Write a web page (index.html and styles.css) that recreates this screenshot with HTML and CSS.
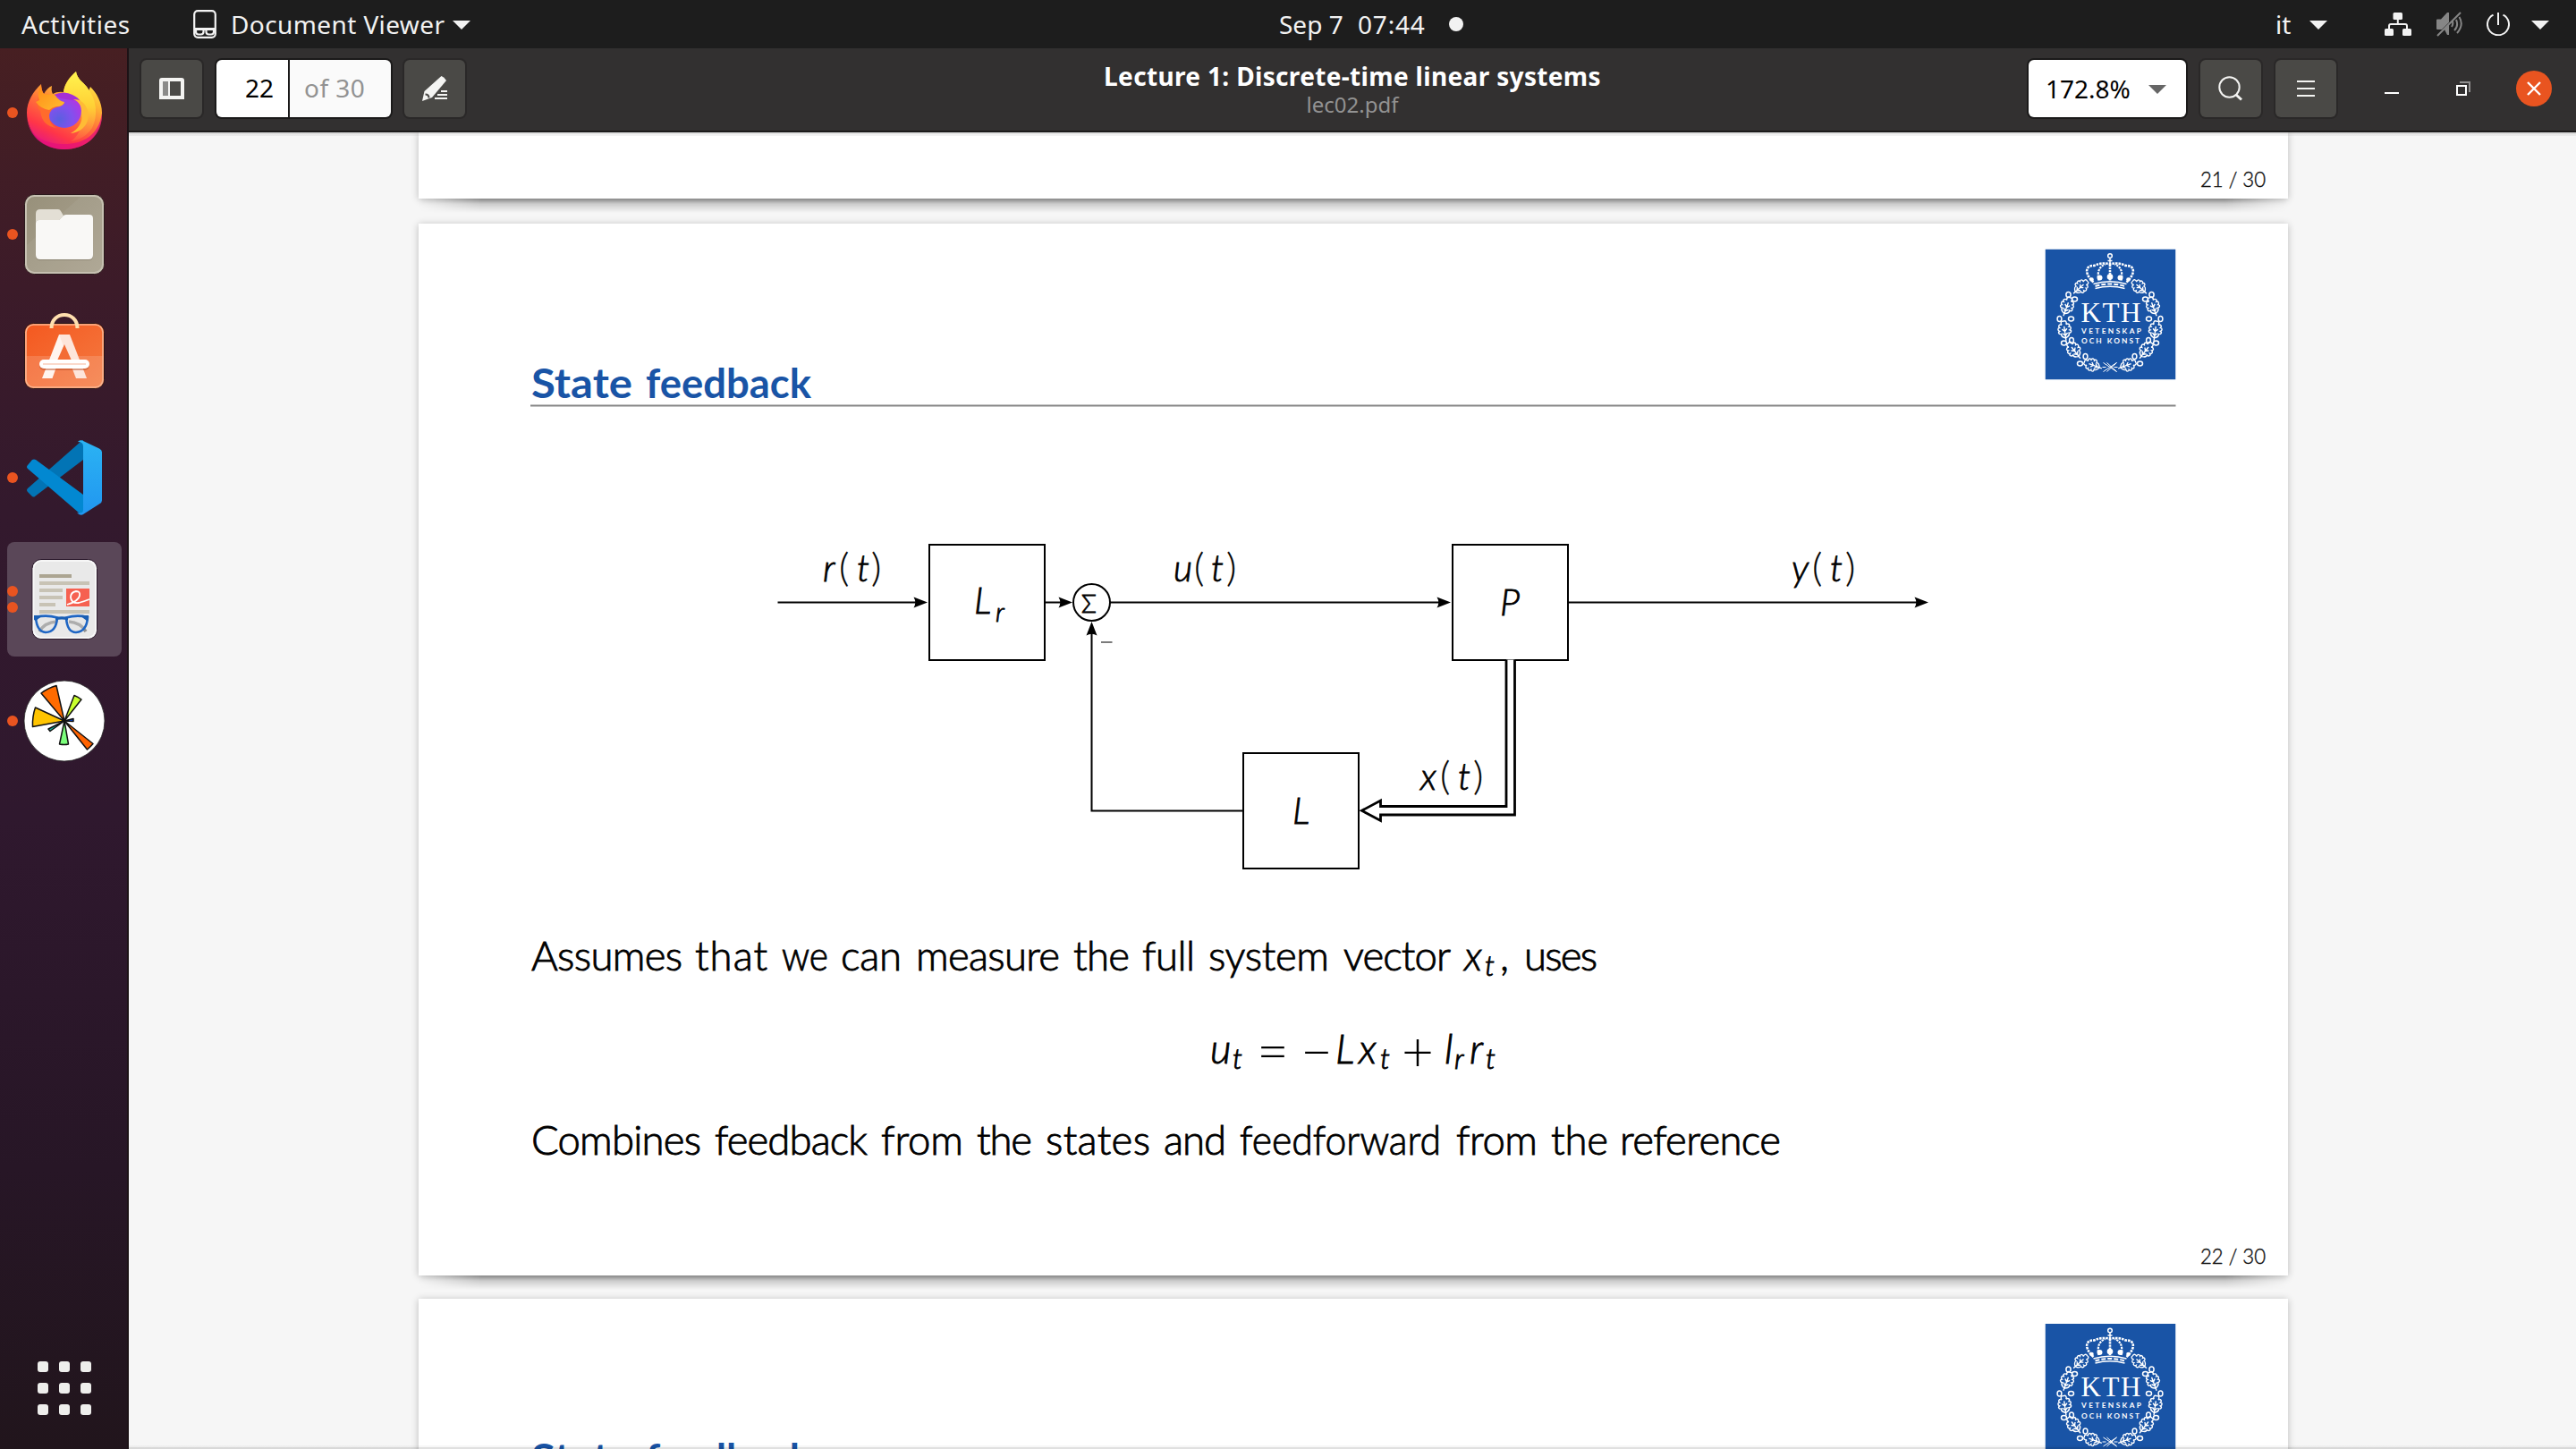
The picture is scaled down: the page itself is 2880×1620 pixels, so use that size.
FILE: index.html
```html
<!DOCTYPE html>
<html lang="en">
<head>
<meta charset="utf-8">
<title>Lecture 1: Discrete-time linear systems</title>
<link rel="stylesheet" href="styles.css">
</head>
<body>
<svg class="defs" aria-hidden="true">
  <defs>
    <symbol id="caret" viewBox="0 0 20 10"><path d="M0 0h20L10 10z" fill="currentColor"/></symbol>
    <path id="leaf" d="M0-12c3-1 4 2 2.500 4c3-1.500 5 1 3 3c2.500 0 3 3 .500 4c2.500 1 1.500 4-1.500 3.500c1 3-1.500 4-4.500 5.500c-3-1.500-5.500-2.500-4.500-5.500c-3 .500-4-2.500-1.500-3.500c-2.500-1-2-4 .500-4c-2-2 0-4.500 3-3c-1.500-2-.500-5 2.500-4zM0-6v17M0 0l3-3M0 0l-3-3M0 5l3-3M0 5l-3-3"/>
    <g id="branch">
      <use href="#leaf" transform="translate(39 43) rotate(48) scale(.9)"/>
      <use href="#leaf" transform="translate(24 65) rotate(20) scale(.95)"/>
      <use href="#leaf" transform="translate(22 92) rotate(-8) scale(.95)"/>
      <use href="#leaf" transform="translate(33 114) rotate(-38) scale(.95)"/>
      <use href="#leaf" transform="translate(54 130) rotate(-70) scale(.9)"/>
      <ellipse cx="26" cy="51" rx="2.600" ry="3"/><ellipse cx="33" cy="56" rx="3" ry="2.400"/>
      <ellipse cx="16" cy="78" rx="2.400" ry="3"/><ellipse cx="29" cy="78" rx="3" ry="2.400"/>
      <ellipse cx="21" cy="105" rx="3" ry="2.400"/><ellipse cx="29.500" cy="102" rx="2.400" ry="3"/>
      <ellipse cx="39" cy="128" rx="3" ry="2.400"/><ellipse cx="45" cy="120" rx="2.400" ry="3"/>
    </g>
    <symbol id="kth" viewBox="0 0 146 146">
      <rect width="146" height="146" fill="#1954a6"/>
      <g fill="none" stroke="#fff" stroke-width="1.500">
        <use href="#branch"/>
        <use href="#branch" transform="translate(145 0) scale(-1 1)"/>
        <path d="M65 127l15 10M65 137l15-10M69 127l11 10M69 137l11-10M64 132h4M77 132h4" stroke-width="1"/>
        <circle cx="72.500" cy="7.500" r="2.300"/><path d="M72.500 10v7M70 13h5"/>
        <path d="M54 37C44 28 44 18 55 18.500C62 15 67 16 72.500 16.500C78 16 83 15 90 18.500C101 18 101 28 91 37" stroke-width="2.600" stroke-dasharray="2.600 1"/>
        <path d="M60 35C58 26 60 20 67 17M85 35C87 26 85 20 78 17" stroke-width="2.200" stroke-dasharray="2.400 1"/>
        <path d="M72.500 17v18" stroke-width="2.600" stroke-dasharray="2.400 .8"/>
        <path d="M54 39q18.500-5.500 37 0M56 44q16.500-4.500 33 0"/>
        <path d="M56 41.500q16.500-5 33 0" stroke-width="2" stroke-dasharray="5 2"/>
      </g>
      <g fill="#fff"><circle cx="52" cy="34" r="2.300"/><circle cx="61" cy="32" r="3"/><circle cx="72.500" cy="31" r="3.300"/><circle cx="84" cy="32" r="3"/><circle cx="93" cy="34" r="2.300"/></g>
      <g fill="#fff">
        <text class="kth-name" x="40" y="81" textLength="67">KTH</text>
        <text class="kth-motto" x="40.500" y="94" textLength="67">VETENSKAP</text>
        <text class="kth-motto" x="40.500" y="105.500" textLength="65">OCH KONST</text>
      </g>
    </symbol>
    <path id="tip" d="M0 0l-15.500-6q3.500 6 0 12z"/>
  </defs>
</svg>

<header class="topbar">
  <div class="topbar-left">
    <span class="ui activities">Activities</span>
    <svg class="app-glyph" viewBox="0 0 26 32"><rect x="1.200" y="1.200" width="23.600" height="29.600" rx="4" fill="none" stroke="#f2f2f2" stroke-width="2.200"/><path d="M1 20h24v3h-24z" fill="#f2f2f2"/><path d="M3 22h8.500v2.500a3 3 0 0 1-3 3h-2.500a3 3 0 0 1-3-3zM14.500 22H23v2.500a3 3 0 0 1-3 3h-2.500a3 3 0 0 1-3-3z" fill="none" stroke="#f2f2f2" stroke-width="2.200"/></svg>
    <span class="ui appname">Document Viewer</span>
    <svg class="caret"><use href="#caret"/></svg>
  </div>
  <div class="topbar-clock">
    <span class="ui date">Sep 7</span><span class="ui time">07:44</span><i class="notice"></i>
  </div>
  <div class="topbar-right">
    <span class="ui lang">it</span>
    <svg class="caret"><use href="#caret"/></svg>
    <svg class="net" viewBox="0 0 30 26"><g fill="#f2f2f2"><rect x="9.500" y="0" width="10.500" height="8" rx="1.500"/><rect x="0" y="18" width="10" height="8" rx="1.500"/><rect x="20" y="18" width="10" height="8" rx="1.500"/></g><path d="M5 19v-4q0-2 2-2h16q2 0 2 2v4M14.800 7v6" fill="none" stroke="#f2f2f2" stroke-width="2"/></svg>
    <svg class="vol" viewBox="0 0 29 28"><g fill="#868686"><path d="M0 9.500q0-1 1-1h4l7-7.500h2v11L6 20H1q-1 0-1-1zM9 20l5-6v12h-2z"/></g><g fill="none" stroke="#868686" stroke-width="2"><path d="M27 1L1 27M17 17q2-3 1-6M20 21q5-5 2-12M23 24q8-9 2.500-18"/></g></svg>
    <svg class="power" viewBox="0 0 26 26"><path d="M7.500 2.600a12 12 0 1 0 11 0M13 0v14" fill="none" stroke="#f2f2f2" stroke-width="2"/></svg>
    <svg class="caret"><use href="#caret"/></svg>
  </div>
</header>

<div class="desktop">
  <nav class="dock">
    <div class="dock-item"><i class="dot"></i>
      <svg class="icon" viewBox="0 0 96 96">
        <defs>
          <linearGradient id="ffb" x1=".8" y1="0" x2=".3" y2="1"><stop offset="0" stop-color="#fff44f"/><stop offset=".3" stop-color="#ffb833"/><stop offset=".55" stop-color="#ff7139"/><stop offset=".8" stop-color="#ff3647"/><stop offset="1" stop-color="#e31587"/></linearGradient>
          <linearGradient id="ffy" x1=".5" y1="0" x2=".5" y2="1"><stop offset="0" stop-color="#fff44f"/><stop offset=".5" stop-color="#ffd035"/><stop offset="1" stop-color="#ff9640" stop-opacity=".2"/></linearGradient>
          <radialGradient id="ffp" cx=".35" cy=".75" r=".8"><stop offset="0" stop-color="#5a5fe0"/><stop offset=".5" stop-color="#8350ee"/><stop offset="1" stop-color="#b833e1"/></radialGradient>
          <linearGradient id="fff" x1="0" y1="0" x2="1" y2="1"><stop offset="0" stop-color="#ff8a16"/><stop offset="1" stop-color="#ffbd2f"/></linearGradient>
        </defs>
        <path d="M22 16q0 7 3 11q4-7 9-9q-1 6 1 9q5-3 12-2C48 15 54 8 61 2c1 8 8 12 12 17l2 5 2-5c7 7 13 17 13 29c0 25-18 41-42 41S6 71 6 48c0-12 7-24 16-32z" fill="url(#ffb)"/>
        <path d="M6 50c1 26 22 33 42 33s38-9 42-34c1 24-18 40-42 40S6 73 6 50z" fill="#e4107a" opacity=".75"/>
        <path d="M61 2c1 8 8 12 12 17c11 13 13 32 6 46c-6 9-15 14-24 15c14-9 15-28 9-36c-5-8-17-9-17-17c0-10 7-18 14-25z" fill="url(#ffy)"/>
        <circle cx="48" cy="46" r="19" fill="url(#ffp)"/>
        <path d="M36 28q12-5 21 0q7 3 9 8q-5-2-10-2l-12-2z" fill="#a52fd6"/>
        <path d="M58 33c14 5 14 30-3 38c14-1 24-14 18-28c-3-7-8-10-15-10z" fill="#ffbb35"/>
        <path d="M22 16q0 7 3 11l12 2q5 6 11 8q-2 4-9 5q-7 2-8 9q0 10 8 14q-16-2-18-19q-3-3-4-8z" fill="#ff6b2c"/>
        <path d="M22 17q0 7 3 10l12 1q5 7 11 8q-1 5-9 5q-5 1-8 4q-9-1-15-9l4-2q-3-8 2-17z" fill="url(#fff)"/>
      </svg>
    </div>
    <div class="dock-item"><i class="dot"></i>
      <svg class="icon" viewBox="0 0 96 96">
        <defs><linearGradient id="fl" x1="0" y1="0" x2="1" y2="1"><stop offset="0" stop-color="#97907a"/><stop offset=".5" stop-color="#a29a86"/><stop offset="1" stop-color="#aca592"/></linearGradient></defs>
        <rect x="3.500" y="3.500" width="89" height="89" rx="11" fill="url(#fl)" stroke="#2b1a1d" stroke-width="1"/>
        <rect x="5" y="5" width="86" height="86" rx="9.500" fill="none" stroke="#c6c0b1" stroke-width="2"/>
        <path d="M6 60L66 6h18q6 0 6 6v72q0 6-6 6H12q-6 0-6-6z" fill="#fff" opacity=".05"/>
        <path d="M16 40V25q0-5 5-5h20q2 0 3 2l4 7-4 8z" fill="#e3dfd5"/>
        <path d="M16 36q0-4 4-4h22l5-5q1-1 3-1h26q4 0 4 4v42q0 5-5 5H21q-5 0-5-5z" fill="#6d6654" opacity=".5"/>
        <path d="M16 36q0-4 4-4h22l5-5q1-1 3-1h26q4 0 4 4v41q0 5-5 5H21q-5 0-5-5z" fill="#f9f8f6"/>
      </svg>
    </div>
    <div class="dock-item">
      <svg class="icon" viewBox="0 0 96 96">
        <defs><linearGradient id="sw" x1="0" y1="0" x2="1" y2="1"><stop offset="0" stop-color="#f4581f"/><stop offset="1" stop-color="#f47b42"/></linearGradient></defs>
        <rect x="3.500" y="11.500" width="89" height="73" rx="10" fill="url(#sw)" stroke="#2b1414"/>
        <path d="M4 48h88v26q0 10-10 10H14q-10 0-10-10z" fill="#fff" opacity=".15"/>
        <rect x="5" y="13" width="86" height="70" rx="8.500" fill="none" stroke="#fab48f" stroke-width="1.600"/>
        <path d="M33.500 17C33.500-3 62.500-3 62.500 17" fill="none" stroke="#ffdfae" stroke-width="4"/>
        <path d="M42 24h10L34.500 73H23z" fill="#fff4ee"/><path d="M42 24h12L73 73H61z" fill="#fde5da"/>
        <path d="M48 35l-8 18h16z" fill="#f36c35"/>
        <rect x="20" y="54" width="56" height="10" rx="5" fill="#b9502a" opacity=".5"/>
        <rect x="20" y="52" width="56" height="10" rx="5" fill="#fff"/><rect x="24" y="56.300" width="48" height="1.400" fill="#f9c9b5"/>
      </svg>
    </div>
    <div class="dock-item"><i class="dot"></i>
      <svg class="icon" viewBox="0 0 96 96">
        <defs><linearGradient id="vs" x1="0" y1="0" x2="0" y2="1"><stop offset="0" stop-color="#2bb3f3"/><stop offset="1" stop-color="#2196f0"/></linearGradient></defs>
        <path d="M66 8q1-2 3-2v22L15 69q-1 1-3 0l-5-5q-2-2 0-4z" fill="#0274b5"/>
        <path d="M7 34l5-6q2-1 4 0l53 39v22q-2 1-4-1L7 38q-2-2 0-4z" fill="#0288d1"/>
        <path d="M63 8q2-3 6-1l18 8.500q3 1.500 3 4v54q0 2.500-3 4L69 89q-4 2-7-2q7 2 7-3V13q0-5-6-5z" fill="url(#vs)"/>
      </svg>
    </div>
    <div class="dock-item active"><span class="dots"><i class="dot"></i><i class="dot"></i></span>
      <svg class="icon" viewBox="0 0 96 96">
        <rect x="12" y="3.500" width="72.500" height="89" rx="10" fill="#e9e9e9" stroke="#29182a"/>
        <rect x="13.500" y="5" width="69.500" height="86" rx="9" fill="none" stroke="#fafafa" stroke-width="1.600"/>
        <path d="M20 20h36v4H20z" fill="#aca592"/>
        <path d="M20 28h56v4H20zM20 36h26v4H20zM20 44h26v4H20zM20 52h18v4H20zM20 60h56v4H20z" fill="#c8c3b5"/>
        <rect x="50" y="36" width="26" height="20" fill="#f66151"/>
        <path d="M51 54q13-4 14-10q1-5-4-5q-6 1-6 7q1 7 9 6q7-2 12-4" fill="none" stroke="#fff" stroke-width="1.800"/>
        <path d="M20 84q6-10 19-11M72 84q-6-10-19-11" fill="none" stroke="#8f8f8f" stroke-width="3.500"/>
        <path d="M16 68q12-3 24 .500q-1 16-13 16.500q-10-1-11-17zM50 68.500q12-3.500 24-.500q-1 16-13 17q-10 0-11-16.500z" fill="#e4e4e4" fill-opacity=".35" stroke="#1f66c4" stroke-width="2.600"/>
        <path d="M14 66h10l-8 6-2-1zM75 66h-10l8 6 2-1zM38 68.500q7-2.500 14 0v3q-7-2-14 0z" fill="#1a5fb4"/>
      </svg>
    </div>
    <div class="dock-item"><i class="dot"></i>
      <svg class="icon" viewBox="0 0 96 96">
        <circle cx="48" cy="48" r="45" fill="#fff" stroke="#222" stroke-width=".8"/>
        <g stroke="#111" stroke-width="1.500" stroke-linejoin="round" transform="translate(48 48)">
          <path d="M0 0L-26-31Q-18-37-9-39.500z" fill="#ff6b00"/><path d="M0 0L11-28.500Q15-27 19-24z" fill="#c8ff2e"/>
          <path d="M0 0L10-2.500V.500z" fill="#0048e0"/><path d="M0 0L32 25.500Q29 29 25.500 32z" fill="#ff6300"/>
          <path d="M0 0L4.500 26Q0 27-5.500 26z" fill="#7bff7b"/><path d="M0 0L-16 11.500-18 9z" fill="#12b8a0"/>
          <path d="M0 0L-35.500 6.500Q-36-5-32.500-15z" fill="#ffc400"/>
        </g>
      </svg>
    </div>
    <div class="apps"><i></i><i></i><i></i><i></i><i></i><i></i><i></i><i></i><i></i></div>
  </nav>

  <main class="window">
    <header class="headerbar">
      <button class="btn sidebar-btn"><svg viewBox="0 0 28 24" width="28" height="24"><path d="M3 0h22q3 0 3 3v21H0V3q0-3 3-3z" fill="#f4f4f2"/><path d="M4 4h6v16H4z" fill="#8b8b89"/><path d="M12 4h12v16H12z" fill="#4a4946"/></svg></button>
      <div class="pager"><span class="pager-cur"><span class="ui">22</span></span><span class="pager-total"><span class="ui">of 30</span></span></div>
      <button class="btn edit-btn"><svg viewBox="0 0 30 28" width="30" height="28"><path d="M22.500 0q3 1 5.500 5L12 24 1 28 3.500 17z" fill="#f4f4f2"/><path d="M4.500 20.500q4 0 4 4" fill="none" stroke="#4a4946" stroke-width="2"/><path d="M22 17h7M18 21h11M15 25h14" stroke="#f4f4f2" stroke-width="2"/></svg></button>
      <div class="titles"><div class="title ui">Lecture 1: Discrete-time linear systems</div><div class="subtitle">lec02.pdf</div></div>
      <div class="zoom"><span class="ui">172.8%</span><svg class="caret"><use href="#caret"/></svg></div>
      <button class="btn search-btn"><svg viewBox="0 0 28 28" width="28" height="28"><circle cx="12.500" cy="12.500" r="11.200" fill="none" stroke="#f4f4f2" stroke-width="2"/><path d="M19.500 20.500l6.500 6" stroke="#f4f4f2" stroke-width="3"/></svg></button>
      <button class="btn menu-btn"><svg viewBox="0 0 20 18" width="20" height="18"><path d="M0 1h20M0 9h20M0 17h20" stroke="#f4f4f2" stroke-width="2"/></svg></button>
      <svg class="win minimize" viewBox="0 0 16 16"><path d="M0 13h16" stroke="#fff" stroke-width="2"/></svg>
      <svg class="win restore" viewBox="0 0 16 16"><path d="M4 1h11v11" fill="none" stroke="#8f8e8e" stroke-width="2"/><path d="M1 5h10v10H1z" fill="none" stroke="#fff" stroke-width="2"/></svg>
      <span class="close"><svg viewBox="0 0 16 16" width="16" height="16"><path d="M1 1l14 14M15 1L1 15" stroke="#fff" stroke-width="2.400"/></svg></span>
    </header>

    <div class="pages">
      <section class="page page-prev">
        <svg class="slide" viewBox="468 148 2090 74">
          <text class="num" x="2460" y="208.500" textLength="73" lengthAdjust="spacingAndGlyphs">21 / 30</text>
        </svg>
      </section>

      <section class="page page-current">
        <svg class="slide" viewBox="468 250 2090 1176">
          <use href="#kth" x="2286.500" y="278.500" width="146" height="146"/>
          <text class="heading" y="444.500"><tspan x="594" textLength="113" lengthAdjust="spacingAndGlyphs">State</tspan> <tspan x="722" textLength="185" lengthAdjust="spacingAndGlyphs">feedback</tspan></text>
          <path d="M593 453.500H2432.500" stroke="#868686" stroke-width="2.200"/>

          <g fill="none" stroke="#000" stroke-width="2">
            <rect x="1039" y="609" width="129" height="129"/>
            <rect x="1624" y="609" width="129" height="129"/>
            <rect x="1390" y="842" width="129" height="129"/>
            <circle cx="1220.500" cy="673.500" r="20.500"/>
            <path d="M869.500 673.500H1030M1168 673.500H1190M1241 673.500H1615M1753 673.500H2146M1390 906.500H1220.500V705"/>
          </g>
          <use href="#tip" x="1037" y="673.500"/><use href="#tip" x="1199" y="673.500"/><use href="#tip" x="1622" y="673.500"/><use href="#tip" x="2156" y="673.500"/>
          <use href="#tip" transform="translate(1220.500 695) rotate(-90)"/>
          <path d="M1684 737.500V901.500H1543.500V895L1522.500 906.300L1543.500 917.500V911H1693.500V737.500" fill="#fff" stroke="#000" stroke-width="2.800"/>

          <g class="math label">
            <text y="649.500"><tspan x="920">r</tspan><tspan class="up paren" x="938">(</tspan><tspan x="958">t</tspan><tspan class="up paren" x="974">)</tspan></text>
            <text y="649.500"><tspan x="1312">u</tspan><tspan class="up paren" x="1335">(</tspan><tspan x="1354">t</tspan><tspan class="up paren" x="1371">)</tspan></text>
            <text y="649.500"><tspan x="2003">y</tspan><tspan class="up paren" x="2026">(</tspan><tspan x="2046">t</tspan><tspan class="up paren" x="2063">)</tspan></text>
            <text y="882.500"><tspan x="1588">x</tspan><tspan class="up paren" x="1610">(</tspan><tspan x="1630">t</tspan><tspan class="up paren" x="1647">)</tspan></text>
            <text x="1089" y="685.500">L<tspan class="sub" x="1113" y="695">r</tspan></text>
            <text x="1677" y="688">P</text>
            <text x="1445" y="921">L</text>
            <text class="up sigma" x="1209" y="684.500">Σ</text>
          </g>
          <path d="M1231 718H1243.500" stroke="#333" stroke-width="1.300"/>

          <g class="body">
            <text y="1085"><tspan x="594" textLength="169">Assumes</tspan> <tspan x="777" textLength="81">that</tspan> <tspan x="874" textLength="52" lengthAdjust="spacingAndGlyphs">we</tspan> <tspan x="940" textLength="68">can</tspan> <tspan x="1024" textLength="161">measure</tspan> <tspan x="1200" textLength="63">the</tspan> <tspan x="1277" textLength="59">full</tspan> <tspan x="1351" textLength="135">system</tspan> <tspan x="1502" textLength="119">vector</tspan> <tspan class="it" x="1637">x</tspan><tspan class="it sub" x="1660" y="1090.500">t</tspan><tspan x="1677" y="1085">,</tspan> <tspan x="1704" textLength="82">uses</tspan></text>
            <text class="it" y="1188.500"><tspan x="1353">u</tspan><tspan class="sub" x="1378" y="1194.500">t</tspan><tspan class="up op" x="1405" y="1197">=</tspan><tspan class="up op" x="1454" y="1197">−</tspan><tspan x="1493" y="1188.500">L</tspan><tspan x="1519">x</tspan><tspan class="sub" x="1543" y="1194.500">t</tspan><tspan class="up op" x="1567" y="1197">+</tspan><tspan x="1615" y="1188.500">l</tspan><tspan class="sub" x="1626" y="1194.500">r</tspan><tspan x="1643" y="1188.500">r</tspan><tspan class="sub" x="1661" y="1194.500">t</tspan></text>
            <text y="1291"><tspan x="594" textLength="190">Combines</tspan> <tspan x="799" textLength="171">feedback</tspan> <tspan x="985" textLength="92">from</tspan> <tspan x="1092" textLength="62">the</tspan> <tspan x="1169" textLength="117">states</tspan> <tspan x="1301" textLength="70">and</tspan> <tspan x="1386" textLength="225" lengthAdjust="spacingAndGlyphs">feedforward</tspan> <tspan x="1628" textLength="91">from</tspan> <tspan x="1734" textLength="64">the</tspan> <tspan x="1811" textLength="180">reference</tspan></text>
          </g>
          <text class="num" x="2460" y="1412.500" textLength="73" lengthAdjust="spacingAndGlyphs">22 / 30</text>
        </svg>
      </section>

      <section class="page page-next">
        <svg class="slide" viewBox="468 1452 2090 1176">
          <use href="#kth" x="2286.500" y="1480" width="146" height="146"/>
          <text class="heading" y="1646.500"><tspan x="594" textLength="113" lengthAdjust="spacingAndGlyphs">State</tspan> <tspan x="722" textLength="185" lengthAdjust="spacingAndGlyphs">feedback</tspan></text>
        </svg>
      </section>
    </div>
  </main>
</div>
</body>
</html>
```
FILE: styles.css
```css
* { box-sizing: border-box; }

body {
  margin: 0;
  width: 2880px;
  height: 1620px;
  overflow: hidden;
  display: flex;
  flex-direction: column;
  font: 28px/40px "Noto Sans", "Open Sans", sans-serif;
  color: #f2f2f2;
  background: #f6f6f6;
}

svg { display: block; flex: none; }
.defs { position: absolute; width: 0; height: 0; }
.ui { white-space: nowrap; flex: none; }
.caret { width: 20px; height: 10px; }

/* Top panel */
.topbar {
  flex: none;
  height: 54px;
  display: grid;
  grid-template-columns: 1430px 1fr 336px;
  align-items: center;
  background: #1d1d1d;
}
.topbar-left, .topbar-clock, .topbar-right { display: flex; align-items: center; height: 54px; }
.topbar .ui { margin-top: -1px; }
.topbar-left { padding-left: 24px; }
.activities { width: 192px; letter-spacing: .5px; }
.app-glyph { width: 26px; height: 32px; margin-right: 16px; }
.appname { width: 248px; letter-spacing: .4px; }
.topbar .caret { margin-top: 2px; }
.date { width: 88px; }
.time { width: 102px; letter-spacing: .8px; }
.notice { width: 16px; height: 16px; border-radius: 50%; background: #f2f2f2; }
.lang { width: 38px; }
.net { width: 30px; height: 26px; margin-left: 64px; }
.vol { width: 29px; height: 28px; margin-left: 28px; }
.power { width: 26px; height: 26px; margin: 0 24px 0 27px; }

.desktop { flex: 1; min-height: 0; display: flex; }

/* Dock */
.dock {
  flex: none;
  width: 144px;
  border-right: 2px solid #1c1216;
  padding-top: 8px;
  display: flex;
  flex-direction: column;
  gap: 8px;
  background: linear-gradient(#471f22 0, #3c1b29 17%, #33192d 33%, #2f182e 55%, #271626 80%, #21151c 100%);
}
.dock-item {
  position: relative;
  flex: none;
  width: 128px;
  height: 128px;
  margin-left: 8px;
  border-radius: 8px;
  display: flex;
  align-items: center;
  justify-content: center;
}
.dock-item.active { background: #5a4758; }
.icon { width: 96px; height: 96px; }
.dot { display: block; width: 12px; height: 12px; border-radius: 50%; background: #e95420; }
.dock-item > .dot, .dots { position: absolute; left: 0; top: 58px; }
.dots { top: 49px; display: grid; gap: 6px; }
.apps {
  margin: auto 0 38px 42px;
  display: grid;
  grid-template-columns: repeat(3, 12px);
  gap: 12px;
}
.apps i { height: 12px; border-radius: 3px; background: #eeeeec; }

/* Viewer window */
.window { flex: 1; min-width: 0; display: flex; flex-direction: column; }
.headerbar {
  flex: none;
  height: 94px;
  padding: 0 27px 2px 14px;
  border-bottom: 2px solid #1b1a1a;
  display: flex;
  align-items: center;
  background: #323030;
}
.btn {
  flex: none;
  width: 68px;
  height: 64px;
  padding: 0;
  border: 0;
  border-radius: 6px;
  box-shadow: 0 0 0 2px #2a2828;
  background: #4a4946;
  display: flex;
  align-items: center;
  justify-content: center;
}
.pager {
  flex: none;
  display: flex;
  width: 195px;
  height: 64px;
  margin: 0 15px 0 16px;
  border-radius: 6px;
  box-shadow: 0 0 0 2px #1b1a1a;
  line-height: 63px;
}
.pager-cur { width: 80px; padding-left: 32px; color: #000; background: #fff; border-radius: 6px 0 0 6px; }
.pager-total { flex: 1; border-left: 2px solid #1b1a1a; padding-left: 16px; color: #929292; background: #fafafa; border-radius: 0 6px 6px 0; letter-spacing: .5px; }
.titles { flex: 1; text-align: center; padding-left: 236px; }
.title { font-weight: 700; line-height: 34px; padding-bottom: 2px; letter-spacing: .34px; color: #fff; }
.subtitle { font-size: 24px; line-height: 26px; color: #929292; }
.zoom {
  flex: none;
  width: 176px;
  height: 64px;
  margin-right: 16px;
  padding: 0 22px 0 19px;
  border-radius: 6px;
  box-shadow: 0 0 0 2px #1b1a1a;
  background: #fff;
  color: #000;
  display: flex;
  align-items: center;
  justify-content: space-between;
}
.zoom .caret { color: #666; margin-top: 2px; }
.menu-btn { margin: 0 54px 0 16px; }
.win { width: 16px; height: 16px; }
.restore { margin: 0 51px 0 64px; }
.close {
  flex: none;
  width: 40px;
  height: 40px;
  border-radius: 50%;
  background: #e95420;
  display: flex;
  align-items: center;
  justify-content: center;
}

/* Pages */
.pages {
  position: relative;
  z-index: 0;
  flex: 1;
  min-height: 0;
  overflow: hidden;
  padding-left: 324px;
  display: flex;
  flex-direction: column;
  background: #f6f6f6;
}
.pages::before, .pages::after {
  content: "";
  position: absolute;
  left: 0;
  right: 0;
  height: 4px;
  z-index: 2;
}
.pages::before { top: 0; background: linear-gradient(rgba(0,0,0,.12) 50%, rgba(0,0,0,.05) 50%); }
.pages::after { bottom: 0; background: linear-gradient(rgba(0,0,0,.03) 50%, rgba(0,0,0,.12) 50%); }
.page {
  position: relative;
  flex: none;
  width: 2090px;
  background: #fff;
  box-shadow: 0 1px 8px rgba(0,0,0,.24);
}
.page::after {
  content: "";
  position: absolute;
  left: 0;
  right: 0;
  top: 100%;
  height: 16px;
  background: linear-gradient(rgba(0,0,0,.36), rgba(0,0,0,.16) 35%, transparent);
  mask-image: linear-gradient(90deg, transparent, #000 70px, #000 2020px, transparent);
}
.page-prev { height: 74px; margin-bottom: 28px; }
.page-current { height: 1176px; margin-bottom: 26px; }
.page-next { height: 1176px; }
.slide { width: 100%; height: 100%; }

/* Slide typography */
.slide text { font-family: Lato, "Open Sans", sans-serif; }
.heading { font-size: 45px; font-weight: 700; fill: #1954a6; }
.num { font-size: 22.500px; font-weight: 300; fill: #111; stroke: #111; stroke-width: .4px; }
.body { font-size: 45.500px; font-weight: 300; stroke: #000; stroke-width: .9px; }
.math, .it { font-style: italic; }
.label { font-size: 41px; font-weight: 300; stroke: #000; stroke-width: .8px; }
.up { font-style: normal; }
.paren { font-size: 44px; stroke-width: .3px; }
.sub { font-size: 30px; }
.body .sub { font-size: 32px; }
.sigma { font-size: 28px; }
.op { font-size: 62px; stroke-width: 0; }
.slide .kth-name, .kth-name { font: 31px "Liberation Serif", serif; }
.kth-motto { font: 700 8.300px Lato, sans-serif; }
```
